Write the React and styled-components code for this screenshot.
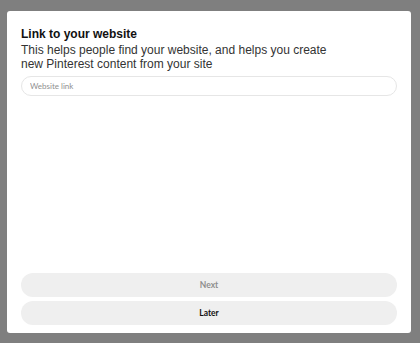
import React from 'react';
import styled, { createGlobalStyle } from 'styled-components';

const GlobalStyle = createGlobalStyle`
  html, body {
    margin: 0;
    padding: 0;
    background: #7f7f7f;
  }
  body {
    font-family: 'Liberation Sans', Arial, sans-serif;
  }
`;

const Backdrop = styled.div`
  width: 420px;
  height: 343px;
  box-sizing: border-box;
  padding: 11px 9px 10px 7px;
  display: flex;
`;

const Modal = styled.div`
  flex: 1;
  background: #ffffff;
  border-radius: 3px;
  padding: 15px 14px 8px 14px;
  display: flex;
  flex-direction: column;
`;

const Title = styled.h1`
  margin: 0 0 1px;
  font-size: 12px;
  line-height: 16px;
  font-weight: 700;
  color: #111111;
`;

const Subtitle = styled.p`
  margin: 0;
  font-size: 12px;
  line-height: 14px;
  color: #333333;
  max-width: 320px;
`;

const Input = styled.input`
  margin-top: 5px;
  height: 20px;
  box-sizing: border-box;
  border: 1px solid #e6e6e6;
  border-radius: 10px;
  padding: 0 8px;
  font-family: 'Lato', sans-serif;
  font-size: 8px;
  color: #333;
  outline: none;
  &::placeholder {
    color: #8f8f8f;
  }
`;

const Spacer = styled.div`
  flex: 1;
`;

const Actions = styled.div`
  display: flex;
  flex-direction: column;
  gap: 4px;
`;

const Button = styled.button`
  height: 24px;
  border: none;
  border-radius: 12px;
  background: #efefef;
  font-family: 'Lato', sans-serif;
  font-size: 8.5px;
  font-weight: 700;
  color: ${(p) => (p.$disabled ? '#8e8e8e' : '#111111')};
  cursor: ${(p) => (p.$disabled ? 'default' : 'pointer')};
`;

export default function App() {
  return (
    <>
      <GlobalStyle />
      <Backdrop>
        <Modal>
          <Title>Link to your website</Title>
          <Subtitle>
            This helps people find your website, and helps you create new
            Pinterest content from your site
          </Subtitle>
          <Input type="text" placeholder="Website link" />
          <Spacer />
          <Actions>
            <Button $disabled>Next</Button>
            <Button>Later</Button>
          </Actions>
        </Modal>
      </Backdrop>
    </>
  );
}
